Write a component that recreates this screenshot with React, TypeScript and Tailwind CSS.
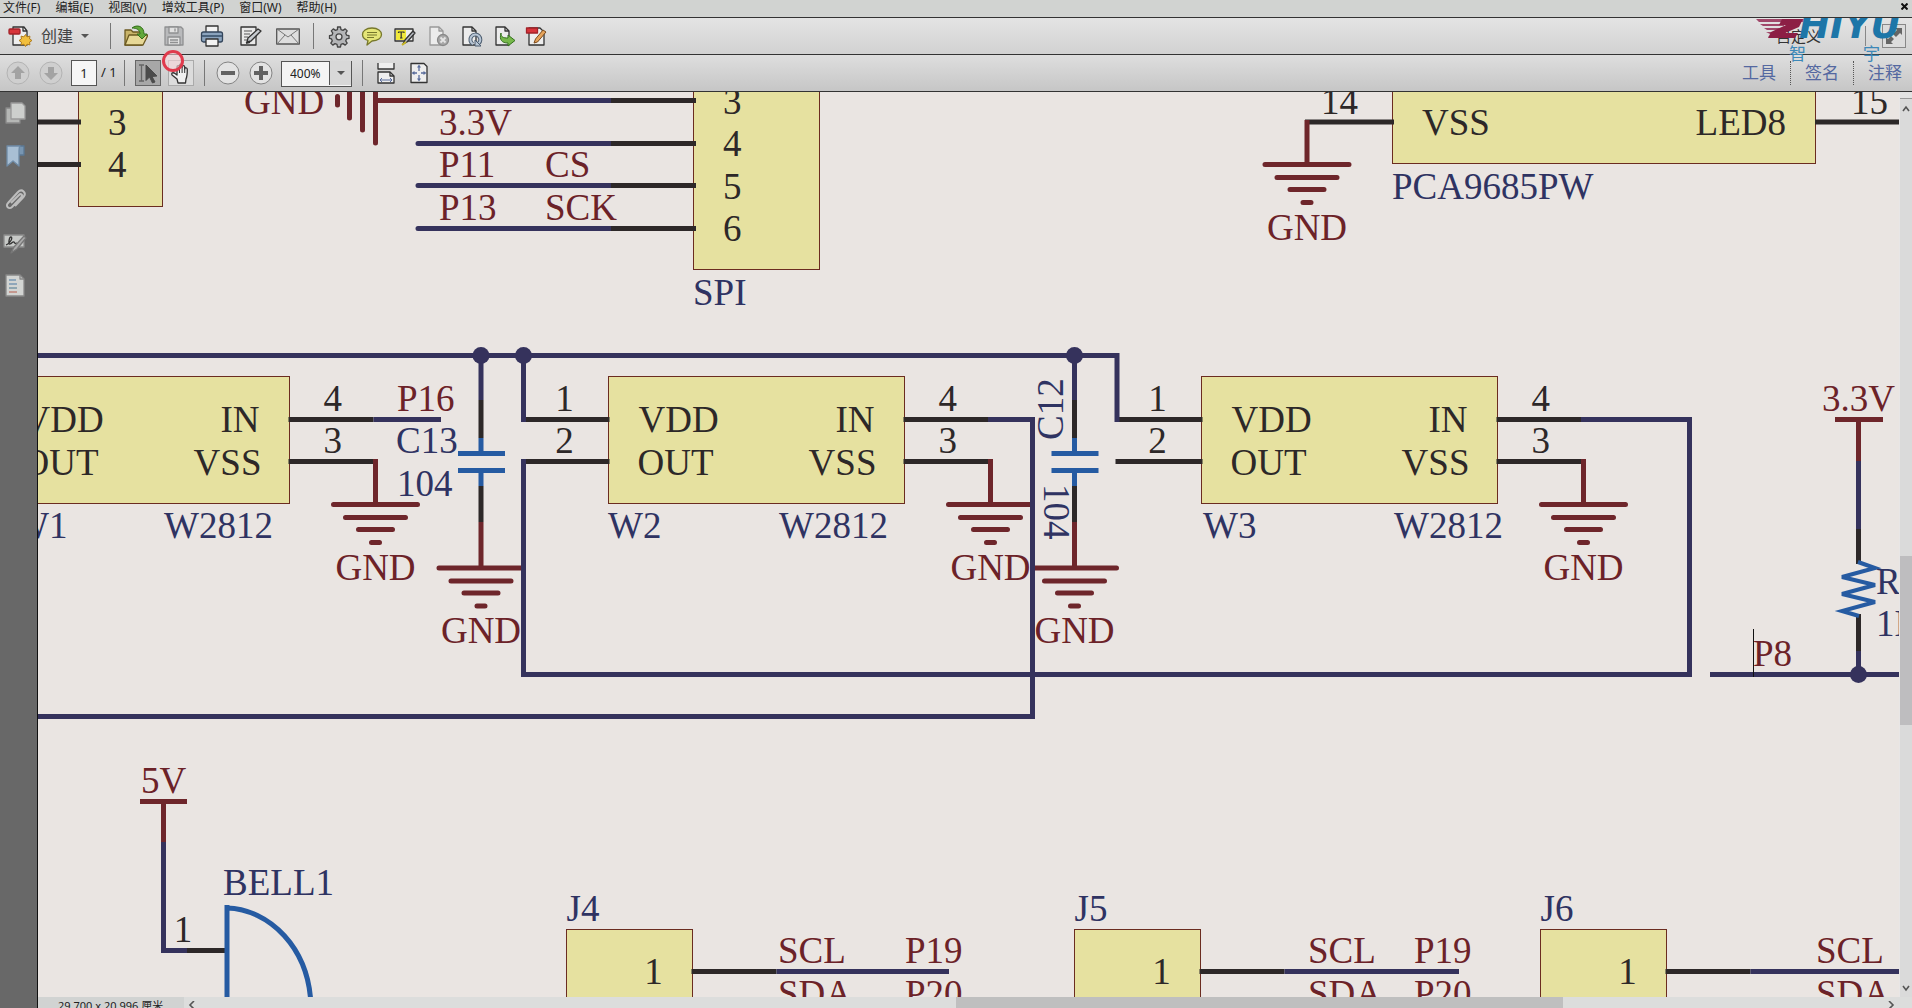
import React from "react";

const NAVY = "#35325c";
const RED = "#6e262b";
const INK = "#2d2828";
const BLUE = "#265ba2";
const LABEL = "#2f3362";
const TEXT_RED = "#6c2228";
const FILL = "#e6e1a0";
const EDGE = "#6b2c20";

/* ---------- schematic primitives ---------- */

function Wire({ d, c = NAVY }: { d: string; c?: string }) {
  return <path d={d} stroke={c} strokeWidth={5} fill="none" />;
}

function Txt({ x, y, c = INK, a = "start", children }: { x: number; y: number; c?: string; a?: "start" | "middle" | "end"; children: React.ReactNode }) {
  return (
    <text x={x} y={y} fill={c} textAnchor={a}>
      {children}
    </text>
  );
}

function Box({ x, y, w, h }: { x: number; y: number; w: number; h: number }) {
  return <rect x={x} y={y} width={w} height={h} fill={FILL} stroke={EDGE} strokeWidth={1} />;
}

function Ground({ x, y, from }: { x: number; y: number; from: number }) {
  return (
    <g>
      <Wire c={RED} d={`M${x} ${from}V${y}`} />
      <g stroke={RED} strokeWidth={5} strokeLinecap="round">
        <path d={`M${x - 42} ${y}h84M${x - 30} ${y + 13}h60M${x - 17} ${y + 25}h34M${x - 4} ${y + 38}h8`} />
      </g>
      <Txt x={x} y={y + 75} c={TEXT_RED} a="middle">GND</Txt>
    </g>
  );
}

function Led({ x, name, nameX, partX }: { x: number; name: string; nameX: number; partX: number }) {
  const r = x + 296;
  return (
    <g>
      <Box x={x} y={376.5} w={296} h={127} />
      <Txt x={x + 30} y={432}>VDD</Txt>
      <Txt x={x + 29} y={475}>OUT</Txt>
      <Txt x={r - 30} y={432} a="end">IN</Txt>
      <Txt x={r - 28} y={475} a="end">VSS</Txt>
      <Txt x={nameX} y={538} c={LABEL}>{name}</Txt>
      <Txt x={partX} y={538} c={LABEL}>W2812</Txt>
      <Wire c={INK} d={`M${x - 86} 419.5H${x + 1}M${x - 86} 461.5H${x + 1}`} />
      <Wire c={INK} d={`M${r - 1} 419.5H${r + 84}M${r - 1} 461.5H${r + 86}`} />
      <Txt x={x - 44} y={411} a="middle">1</Txt>
      <Txt x={x - 44} y={453} a="middle">2</Txt>
      <Txt x={r + 34} y={411}>4</Txt>
      <Txt x={r + 34} y={453}>3</Txt>
      <Ground x={r + 86} y={504.5} from={459} />
    </g>
  );
}

function Capacitor({ x }: { x: number }) {
  return (
    <g>
      <Wire d={`M${x} 355V400`} />
      <Wire c={INK} d={`M${x} 400V438M${x} 486V522`} />
      <Wire c={BLUE} d={`M${x} 438V453M${x - 23} 453.5H${x + 24}M${x - 23} 470.5H${x + 24}M${x} 470V486`} />
      <Ground x={x} y={568} from={522} />
    </g>
  );
}

function Header({ x, name, wireEnd, sclX, pX }: { x: number; name: string; wireEnd: number; sclX: number; pX: number }) {
  return (
    <g>
      <Txt x={x} y={921} c={LABEL}>{name}</Txt>
      <Box x={x} y={929.5} w={126} h={150} />
      <Txt x={x + 87} y={984} a="middle">1</Txt>
      <Wire c={INK} d={`M${x + 125} 971.5H${x + 210}`} />
      <Wire d={`M${x + 210} 971.5H${wireEnd}`} />
      <Txt x={sclX} y={963} c={TEXT_RED}>SCL</Txt>
      <Txt x={sclX} y={1006} c={TEXT_RED}>SDA</Txt>
      <Txt x={pX} y={963} c={TEXT_RED}>P19</Txt>
      <Txt x={pX} y={1006} c={TEXT_RED}>P20</Txt>
    </g>
  );
}

function Schematic() {
  return (
    <svg className="block h-full w-full" role="img" aria-label="Circuit schematic">
      <g transform="translate(-38 -92)" fontFamily='"Liberation Serif", serif' fontSize={37}>
        {/* connector, top left */}
        <Box x={78.5} y={60.5} w={84} h={146} />
        <Wire c={INK} d="M30 122H81M30 164.5H81" />
        <Txt x={108} y={135}>3</Txt>
        <Txt x={108} y={177}>4</Txt>

        {/* SPI header */}
        <Txt x={244} y={114} c={TEXT_RED}>GND</Txt>
        <g stroke={RED} strokeWidth={5} strokeLinecap="round">
          <path d="M337.5 96.500V105M349.500 83V118M362.500 70V130M375.500 60V143" />
        </g>
        <Wire c={RED} d="M376 100.500H420" />
        <Wire d="M420 100.500H611" />
        <g stroke={NAVY} strokeWidth={5} strokeLinecap="round">
          <path d="M418 143.500H611M418 185.500H611M418 228.500H611" />
        </g>
        <Box x={693.5} y={60.5} w={126} h={209} />
        <Wire c={INK} d="M611 100.500H696M611 143.500H696M611 185.500H696M611 228.500H696" />
        <Txt x={723} y={114}>3</Txt>
        <Txt x={723} y={156}>4</Txt>
        <Txt x={723} y={199}>5</Txt>
        <Txt x={723} y={241}>6</Txt>
        <Txt x={439} y={135} c={TEXT_RED}>3.3V</Txt>
        <Txt x={439} y={177} c={TEXT_RED}>P11</Txt>
        <Txt x={439} y={220} c={TEXT_RED}>P13</Txt>
        <Txt x={545} y={177} c={TEXT_RED}>CS</Txt>
        <Txt x={545} y={220} c={TEXT_RED}>SCK</Txt>
        <Txt x={693} y={305} c={LABEL}>SPI</Txt>

        {/* PCA9685PW */}
        <Box x={1392.5} y={60.5} w={423} h={103} />
        <Wire c={INK} d="M1305 122H1394M1815 122H1910" />
        <Ground x={1307} y={164.5} from={120} />
        <Txt x={1321} y={114}>14</Txt>
        <Txt x={1851} y={114}>15</Txt>
        <Txt x={1422} y={135}>VSS</Txt>
        <Txt x={1786} y={135} a="end">LED8</Txt>
        <Txt x={1392} y={199} c={LABEL}>PCA9685PW</Txt>

        {/* LED chain */}
        <Led x={-6.5} name="W1" nameX={14} partX={164} />
        <Led x={608.5} name="W2" nameX={608} partX={779} />
        <Led x={1201.5} name="W3" nameX={1203} partX={1394} />
        <Wire d="M30 355.500H1117V422" />
        <Wire d="M523.500 355V422" />
        <Wire d="M373.500 419.500H441" />
        <Wire d="M523.500 459V674.500H1689.500V419.500H1581" />
        <Wire d="M988 419.500H1032.500V716.500H30" />
        <Capacitor x={481} />
        <Capacitor x={1074.5} />
        <Wire d="M523.500 560V580M1032.500 560V660" />
        <circle cx={481} cy={355.5} r={8.500} fill={NAVY} />
        <circle cx={523.5} cy={355.5} r={8.500} fill={NAVY} />
        <circle cx={1074.5} cy={355.5} r={8.500} fill={NAVY} />
        <Txt x={397} y={411} c={TEXT_RED}>P16</Txt>
        <Txt x={396} y={453} c={LABEL}>C13</Txt>
        <Txt x={397} y={496} c={LABEL}>104</Txt>
        <g fill={LABEL}>
          <text transform="translate(1063 440) rotate(-90)">C12</text>
          <text transform="translate(1044 484) rotate(90)">104</text>
        </g>

        {/* pull-up resistor */}
        <Txt x={1822} y={411} c={TEXT_RED}>3.3V</Txt>
        <Wire c={RED} d="M1835 419.500H1883M1858.500 419V461" />
        <Wire d="M1858.500 461V529M1858.500 651V674M1710 674.500H1910" />
        <Wire c={INK} d="M1858.500 529V564M1858.500 614V651" />
        <path d="M1858 562L1875 568L1842 577L1875 585L1842 594L1875 602L1842 611L1859 616" fill="none" stroke={BLUE} strokeWidth={4} />
        <circle cx={1858.5} cy={674.5} r={8.500} fill={NAVY} />
        <Txt x={1876} y={594} c={LABEL}>R1</Txt>
        <Txt x={1876} y={636} c={LABEL}>1K</Txt>
        <Txt x={1753} y={666} c={TEXT_RED}>P8</Txt>
        <path d="M1753.500 629V677" stroke="#111" strokeWidth={1} />

        {/* bell */}
        <Txt x={141} y={793} c={TEXT_RED}>5V</Txt>
        <Wire c={RED} d="M140 801.500H187M163.500 801V842" />
        <Wire d="M163.500 842V950.500H187" />
        <Wire c={INK} d="M187 950.500H226" />
        <Txt x={183} y={942} a="middle">1</Txt>
        <Txt x={223} y={895} c={LABEL}>BELL1</Txt>
        <path d="M227 905V1010M227 908C268 909 311 947 311 1010" fill="none" stroke={BLUE} strokeWidth={5} />

        <Header x={566.5} name="J4" wireEnd={949} sclX={778} pX={905} />
        <Header x={1074.5} name="J5" wireEnd={1459} sclX={1308} pX={1414} />
        <Header x={1540.5} name="J6" wireEnd={1910} sclX={1816} pX={1922} />
      </g>
    </svg>
  );
}

/* ---------- icons ---------- */

function Icon({ children }: { children: React.ReactNode }) {
  return (
    <svg width="24" height="24" viewBox="0 0 24 24" fill="none" stroke="#333" strokeWidth="1.3" strokeLinejoin="round" aria-hidden="true">
      {children}
    </svg>
  );
}

const Page = ({ s = "#333" }: { s?: string }) => (
  <>
    <path d="M4 3h9l4 4v14H4z" fill="#ececec" stroke={s} />
    <path d="M13 3v4h4" stroke={s} />
  </>
);

const CreateIcon = () => (
  <Icon>
    <path d="M5 3h11l3 4v14H5z" fill="#eee" />
    <path d="M15 3v4h4" />
    <rect x="1" y="5" width="11" height="5" rx="1" fill="#d8343b" stroke="#a32229" />
    <path d="M17.500 10.500l1.600 2.400 2.800-.8-.3 2.900 2.400 1.500-2.400 1.500.3 2.900-2.800-.7-1.600 2.300-1.600-2.300-2.800.7.300-2.900-2.400-1.500 2.400-1.500-.3-2.900 2.800.8z" fill="#f2bf3d" stroke="#b07b1c" strokeWidth="1" />
  </Icon>
);
const OpenIcon = () => (
  <Icon>
    <path d="M1 6h6l2 2h9v13H1z" fill="#c9b46a" stroke="#6c5a22" />
    <path d="M1 21L5 11h19l-5 10z" fill="#e7d897" stroke="#6c5a22" />
    <path d="M8 4c5-4 12-2 12 6h3l-5 5-5-5h3c0-4-3-6-8-6z" fill="#62a83a" stroke="#34701c" strokeWidth="1" />
  </Icon>
);
const SaveIcon = () => (
  <Icon>
    <g stroke="#8f9091">
      <path d="M3 3h16l2 2v16H3z" fill="#b9babc" />
      <rect x="7" y="3" width="9" height="6" fill="#e1e1e1" />
      <rect x="6" y="13" width="12" height="8" fill="#e1e1e1" />
      <path d="M8 16h8M8 18.500h8M13 4.500v3" />
    </g>
  </Icon>
);
const PrintIcon = () => (
  <Icon>
    <path d="M6 9V2h12v7" fill="#f2f2f2" />
    <rect x="1.500" y="8" width="21" height="10" rx="2" fill="#8ba3bd" stroke="#34465c" />
    <path d="M2 12h20" stroke="#4a627c" strokeWidth="2" />
    <path d="M6 15h12v7H6z" fill="#f2f2f2" />
  </Icon>
);
const EditIcon = () => (
  <Icon>
    <path d="M3 3h15v18H3z" fill="#e9e9e9" />
    <path d="M6 7h8M6 10h6M6 13h4M6 16h4" stroke="#888" />
    <path d="M9 18l1-4L20 5l3 2-10 10z" fill="#c8ccd1" />
    <path d="M8 19l4-1" strokeWidth="2" />
  </Icon>
);
const MailIcon = () => (
  <Icon>
    <rect x="0.700" y="5" width="22.600" height="15" fill="#dedede" stroke="#555" />
    <path d="M1 5l11 8 11-8M1 20l8-9M23 20l-8-9" stroke="#777" strokeWidth="1" />
  </Icon>
);
const GearIcon = () => (
  <Icon>
    <path d="M10.500 3h3l.5 2.600 2 .8 2.200-1.500 2 2-1.500 2.200.8 2 2.500.500v2.800l-2.500.500-.8 2 1.500 2.200-2 2-2.200-1.500-2 .8-.5 2.600h-3l-.5-2.600-2-.8-2.200 1.500-2-2 1.500-2.200-.8-2L2.500 14.400v-2.800l2.500-.500.8-2-1.500-2.200 2-2 2.200 1.500 2-.8z" fill="#b4b5b7" stroke="#444" />
    <circle cx="12" cy="12.800" r="3" fill="#dedede" stroke="#444" />
  </Icon>
);
const CommentIcon = () => (
  <Icon>
    <path d="M12 4c6 0 9.500 3 9.500 6.500S18 17 12 17l-5 4 1-4.500c-3-1-5.500-3-5.500-6C2.500 7 6 4 12 4z" fill="#e5e678" stroke="#77782c" />
    <path d="M7 8.500h10M7 11h10M7 13.500h7" stroke="#77782c" strokeWidth="1" />
  </Icon>
);
const HighlightIcon = () => (
  <Icon>
    <rect x="2" y="5" width="18" height="12" fill="#eee" />
    <rect x="3" y="6" width="10" height="10" fill="#f0e83a" stroke="none" />
    <path d="M5.500 9V8h5.500v1M8.200 8v6M7 14h2.500" strokeWidth="1.200" />
    <path d="M10 20l2-4 8-9 2 2-8 9z" fill="#b8bcc4" />
    <path d="M9 21l4-3" stroke="#c6b522" strokeWidth="2" />
  </Icon>
);
const PageDeleteIcon = () => (
  <Icon>
    <Page s="#999" />
    <circle cx="17" cy="16" r="5.500" fill="#a8a8a8" stroke="#888" />
    <path d="M14.500 13.500l5 5M19.500 13.500l-5 5" stroke="#e5e5e5" strokeWidth="1.800" />
  </Icon>
);
const PageRefreshIcon = () => (
  <Icon>
    <Page />
    <path d="M14 20a5 5 0 1 1 5.500-.5" stroke="#4c5d70" strokeWidth="4" />
    <path d="M14 20a5 5 0 1 1 5.500-.5" stroke="#b9c7d6" strokeWidth="2" />
    <path d="M16 16v6h6z" fill="#b9c7d6" stroke="#4c5d70" strokeWidth="1" />
  </Icon>
);
const PageExportIcon = () => (
  <Icon>
    <Page />
    <path d="M9 9c0 4 2 5 7 5v-3l7 5.500-7 5.500v-3c-6 0-9-3-7-10z" fill="#76b84a" stroke="#33701c" strokeWidth="1" />
  </Icon>
);
const SignIcon = () => (
  <Icon>
    <path d="M4 4h11l4 4v13H4z" fill="#eee" />
    <rect x="1.500" y="4" width="11" height="5" fill="#d8343b" stroke="#a32229" />
    <path d="M9 19l1.500-4L18 6l3 2-8.500 10z" fill="#e5a35b" stroke="#7a4a1c" strokeWidth="1" />
  </Icon>
);
const FitWidthIcon = () => (
  <Icon>
    <path d="M4 2v6h16V2M4 22V11h12l4 4v7z" fill="#eee" />
    <path d="M16 11v4h4" />
    <path d="M6 19h12M8 17l-2 2 2 2M16 17l2 2-2 2" stroke="#596c9c" strokeWidth="1" />
  </Icon>
);
const FitPageIcon = () => (
  <Icon>
    <path d="M4 2.500h13l3 3v16H4z" fill="#eee" />
    <path d="M12 5v5M12 14v5M6 12h4M14 12h4" stroke="#596c9c" />
    <path d="M12 3.500l2 3h-4zM12 20.500l2-3h-4zM4.500 12l3-2v4zM19.500 12l-3-2v4z" fill="#596c9c" stroke="none" />
  </Icon>
);
const SelectIcon = () => (
  <Icon>
    <path d="M3 4h5M5.500 4v16M3 20h5" stroke="#666" />
    <path d="M10 4l11 11-5 .5 3 5.500-2.500 1-3-6-3.500 3.500z" fill="#4b4b4b" stroke="#4b4b4b" strokeWidth="1" />
  </Icon>
);
const HandIcon = () => (
  <Icon>
    <path d="M9 22l-1-4-5-4c-1-2 1-3 3-1.500l2 1.500V6c0-1.800 2.500-1.800 2.500 0V4.500c0-2 2.600-2 2.600 0V6c0-2 2.600-1.800 2.600 0v2c.2-1.800 2.600-1.600 2.600.4 0 4 0 6.600-1.300 9.600l-.5 4z" fill="#f1f1f1" />
    <path d="M10.500 6v6M13.100 6v6M15.700 8v4" strokeWidth="1" />
  </Icon>
);

function Round({ kind, dim }: { kind: "up" | "down" | "minus" | "plus"; dim?: boolean }) {
  const paths = {
    up: "M12 5l7 7h-4v6H9v-6H5z",
    down: "M12 19l7-7h-4V6H9v6H5z",
    minus: "M5 10h14v4H5z",
    plus: "M10 5h4v5h5v4h-5v5h-4v-5H5v-4h5z",
  };
  return (
    <svg width="24" height="24" viewBox="0 0 24 24" aria-hidden="true">
      <circle cx="12" cy="12" r="11" fill={dim ? "#cfcfcf" : "#e3e3e3"} stroke={dim ? "#b3b3b3" : "#838383"} />
      <path d={paths[kind]} fill={dim ? "#a3a3a3" : "#626262"} />
    </svg>
  );
}

function Tool({ label, wide, children }: { label: string; wide?: boolean; children: React.ReactNode }) {
  return (
    <button aria-label={label} className={wide ? "flex h-8 w-[38px] items-center justify-center" : "flex h-8 w-[33px] items-center justify-center"}>
      {children}
    </button>
  );
}

const Sep = () => <span className="h-[26px] w-px shrink-0 bg-[#777]" />;
const Caret = () => <span className="block h-0 w-0 border-x-4 border-t-4 border-x-transparent border-t-[#555]" />;
const Chevron = ({ d }: { d: string }) => (
  <svg width="8" height="8" viewBox="0 0 8 8" fill="none" stroke="#555" strokeWidth="1.6" aria-hidden="true">
    <path d={d} />
  </svg>
);

function Brand() {
  return (
    <svg className="pointer-events-none absolute top-0 right-2 z-10" width="150" height="44" viewBox="0 0 150 44" role="img" aria-label="智宇">
      <g fill="#a0486a">
        <path d="M2 1h48l-1 3H5zM6 6h24v2H9zM10 10h20v2H13zM12 14h20v2H16zM14 18h20v2H17z" />
      </g>
      <path d="M28 1h21l-4 8-14 6h13l-3 5H14l3-6 15-7H25z" fill="#8c1f45" />
      <text x="45" y="20" fill="#1d76a8" fontFamily='"DejaVu Sans", sans-serif' fontWeight="bold" fontStyle="italic" fontSize="37">HIYU</text>
      <g fill="#3c88b8" fontFamily='"Noto Sans CJK SC", sans-serif' fontSize="17">
        <text x="35" y="42">智</text>
        <text x="109" y="42">宇</text>
      </g>
    </svg>
  );
}

const menus = ["文件(F)", "编辑(E)", "视图(V)", "增效工具(P)", "窗口(W)", "帮助(H)"];

export default function App() {
  return (
    <div className='flex h-screen flex-col overflow-hidden bg-[#d2d4d2] font-["Noto_Sans","Noto_Sans_CJK_SC",sans-serif] text-[#222]'>
      <nav className="flex h-[18px] shrink-0 items-center justify-between border-b border-[#333] bg-[#d1d3d1] pr-1 pl-[3px]">
        <div className="flex items-center gap-[15px] pb-[2px]">
          {menus.map((m) => (
            <button key={m} className="text-xs leading-[15px] whitespace-nowrap">{m}</button>
          ))}
        </div>
        <button aria-label="关闭" className="pb-1">
          <svg width="7" height="7" viewBox="0 0 7 7" stroke="#111" strokeWidth="2" aria-hidden="true">
            <path d="M.5.500l6 6M6.500.500l-6 6" />
          </svg>
        </button>
      </nav>

      <header className="relative flex h-[37px] shrink-0 items-center border-b border-[#333] bg-linear-to-b from-[#e4e4e4] to-[#d2d2d2] pl-2">
        <button className="flex h-8 w-[102px] items-center">
          <CreateIcon />
          <span className="pr-2 pl-[9px] text-base leading-5 text-[#444]">创建</span>
          <Caret />
        </button>
        <Sep />
        <div className="flex px-[6px]">
          <Tool wide label="打开"><OpenIcon /></Tool>
          <Tool wide label="保存"><SaveIcon /></Tool>
          <Tool wide label="打印"><PrintIcon /></Tool>
          <Tool wide label="编辑"><EditIcon /></Tool>
          <Tool wide label="邮件"><MailIcon /></Tool>
        </div>
        <Sep />
        <div className="flex pl-2">
          <Tool label="设置"><GearIcon /></Tool>
          <Tool label="注释"><CommentIcon /></Tool>
          <Tool label="高亮"><HighlightIcon /></Tool>
          <Tool label="删除页面"><PageDeleteIcon /></Tool>
          <Tool label="旋转页面"><PageRefreshIcon /></Tool>
          <Tool label="导出"><PageExportIcon /></Tool>
          <Tool label="填写签名"><SignIcon /></Tool>
        </div>
        <div className="ml-auto flex items-center pr-[6px]">
          <button className="pr-[44px] text-[15px] leading-5 text-[#333]">自定义</button>
          <span className="mr-4 h-5 w-px bg-[#888]" />
          <button aria-label="全屏" className="flex h-6 w-6 items-center justify-center border border-[#888] bg-[#dcdcdc]">
            <svg width="20" height="20" viewBox="0 0 20 20" fill="#666" aria-hidden="true">
              <path d="M11 2h7v7l-2-2-4 4-3-3 4-4zM9 18H2v-7l2 2 3-3 3 3-3 3z" />
            </svg>
          </button>
        </div>
        <Brand />
      </header>

      <div className="relative flex h-[37px] shrink-0 items-center border-b border-[#333] bg-linear-to-b from-[#dedede] to-[#c6c6c6] pl-px">
        <Tool label="上一页"><Round kind="up" dim /></Tool>
        <Tool label="下一页"><Round kind="down" dim /></Tool>
        <label className="ml-1 flex items-center text-[13px]">
          <input aria-label="页码" defaultValue="1" className="h-[26px] w-[26px] border border-[#555] bg-[#f6f6f6] text-center" />
          <span className="w-[27px] pl-1 whitespace-nowrap">/ 1</span>
        </label>
        <Sep />
        <button aria-label="选择工具" className="ml-[10px] flex h-[26px] w-[26px] items-center justify-center border border-[#666] bg-[#a7a7a7]">
          <SelectIcon />
        </button>
        <button aria-label="手形工具" className="mr-[10px] ml-[7px] flex h-[26px] w-[26px] items-center justify-center border border-[#aaa] bg-[#dcdcdc]">
          <HandIcon />
        </button>
        <Sep />
        <div className="flex pr-1 pl-[6px]">
          <Tool label="缩小"><Round kind="minus" /></Tool>
          <Tool label="放大"><Round kind="plus" /></Tool>
        </div>
        <div className="relative mr-[10px] h-[26px] w-[71px]">
          <select aria-label="缩放比例" defaultValue="400%" className="h-[26px] w-[71px] appearance-none border border-[#555] bg-[#f4f4f4] pl-2 text-xs">
            <option>400%</option>
          </select>
          <span className="pointer-events-none absolute inset-y-px right-px flex w-[22px] items-center justify-center border-l border-[#555] bg-[#d8d8d8]">
            <Caret />
          </span>
        </div>
        <Sep />
        <div className="flex pl-[6px]">
          <Tool label="适合宽度"><FitWidthIcon /></Tool>
          <Tool label="适合页面"><FitPageIcon /></Tool>
        </div>
        <div className="ml-auto flex items-center text-[17px] leading-6 text-[#5468a0]">
          <button className="px-[14px]">工具</button>
          <button className="border-l border-dotted border-[#555] px-[14px]">签名</button>
          <button className="border-l border-dotted border-[#555] pr-[10px] pl-[14px]">注释</button>
        </div>
        <span className="pointer-events-none absolute -top-[5px] left-[162px] z-20 h-[22px] w-[22px] rounded-full border-[3px] border-[#e03a4c] bg-[#f7d5d8]/60" />
      </div>

      <div className="flex min-h-0 flex-1">
        <aside className="flex w-[38px] shrink-0 flex-col border-r border-[#111] bg-[#686868] pr-[7px]">
          <button aria-label="页面缩略图" className="flex h-[43px] items-center justify-center">
            <Icon>
              <path d="M3 6h14v15H3z" fill="#b5b7b5" stroke="#888" />
              <path d="M8 1h11l3 3v13H8z" fill="#cdcfcd" stroke="#999" />
            </Icon>
          </button>
          <button aria-label="书签" className="flex h-[43px] items-center justify-center">
            <Icon>
              <path d="M14 1h7v9h-5z" fill="#7896b2" stroke="#5b7894" />
              <path d="M4 1h13c-1 1-1 3-1 5v15l-6-5-6 5z" fill="#a8bfd4" stroke="#6f8ba6" />
            </Icon>
          </button>
          <button aria-label="附件" className="flex h-[43px] items-center justify-center">
            <Icon>
              <path d="M8 15l8-8c2-2 4 0 2.500 2L9 19c-3 3-7-1-4-4L15 4c4-4 9 1 5.500 5L12 18" stroke="#bdbdbd" strokeWidth="2" />
            </Icon>
          </button>
          <button aria-label="签名" className="flex h-[43px] items-center justify-center">
            <Icon>
              <path d="M1 4h20v12H1z" fill="#c7c9c7" stroke="#8b8b8b" />
              <path d="M3 14c5-2 7-8 5-8s-3 8-1 7 3-3 4-2 0 2 3 1" stroke="#333" />
              <path d="M8 22l3-6L21 5l2 2-9 11z" fill="#aaa" stroke="#777" />
            </Icon>
          </button>
          <button aria-label="内容" className="flex h-[43px] items-center justify-center">
            <Icon>
              <path d="M3 1h14l4 4v17H3z" fill="#d2d4d2" stroke="#888" />
              <path d="M17 1v4h4" stroke="#888" />
              <path d="M6 6h7M6 10h8" stroke="#7896b2" strokeWidth="1.600" />
              <path d="M6 14h8" stroke="#7d9aa8" strokeWidth="1.600" />
              <path d="M6 18h8" stroke="#c08a7e" strokeWidth="1.600" />
            </Icon>
          </button>
        </aside>

        <div className="flex min-w-0 flex-1 flex-col">
          <div className="flex min-h-0 flex-1">
            <main className="min-w-0 flex-1 overflow-hidden bg-[#eae5e2]">
              <Schematic />
            </main>
            <div className="flex w-[13px] shrink-0 flex-col items-center border-l border-[#e8e6e6] bg-[#dadada]">
              <span className="h-[7px] w-full border-b border-[#999] bg-[#e2e2e2]" />
              <span className="flex h-5 items-center"><Chevron d="M1 6l3-4 3 4" /></span>
              <span className="grow-[437]" />
              <span className="w-full grow-[169] bg-[#bebdbf]" />
              <span className="grow-[254]" />
              <span className="flex h-[18px] items-center"><Chevron d="M1 2l3 4 3-4" /></span>
            </div>
          </div>
          <footer className="flex h-[11px] shrink-0 overflow-hidden bg-[#dcdddc]">
            <div className="w-[146px] shrink-0 bg-[#d1d3d2] pl-5 text-[11px] leading-[18px] whitespace-nowrap">29.700 x 20.996 厘米</div>
            <span className="flex w-4 items-center justify-center pt-1"><Chevron d="M6 0L2 4l4 4" /></span>
            <span className="grow-[756]" />
            <span className="grow-[607] bg-[#bfbfbf]" />
            <span className="grow-[320]" />
            <span className="flex w-4 items-center justify-center pt-1"><Chevron d="M2 0l4 4-4 4" /></span>
            <span className="w-[13px]" />
          </footer>
        </div>
      </div>
    </div>
  );
}
